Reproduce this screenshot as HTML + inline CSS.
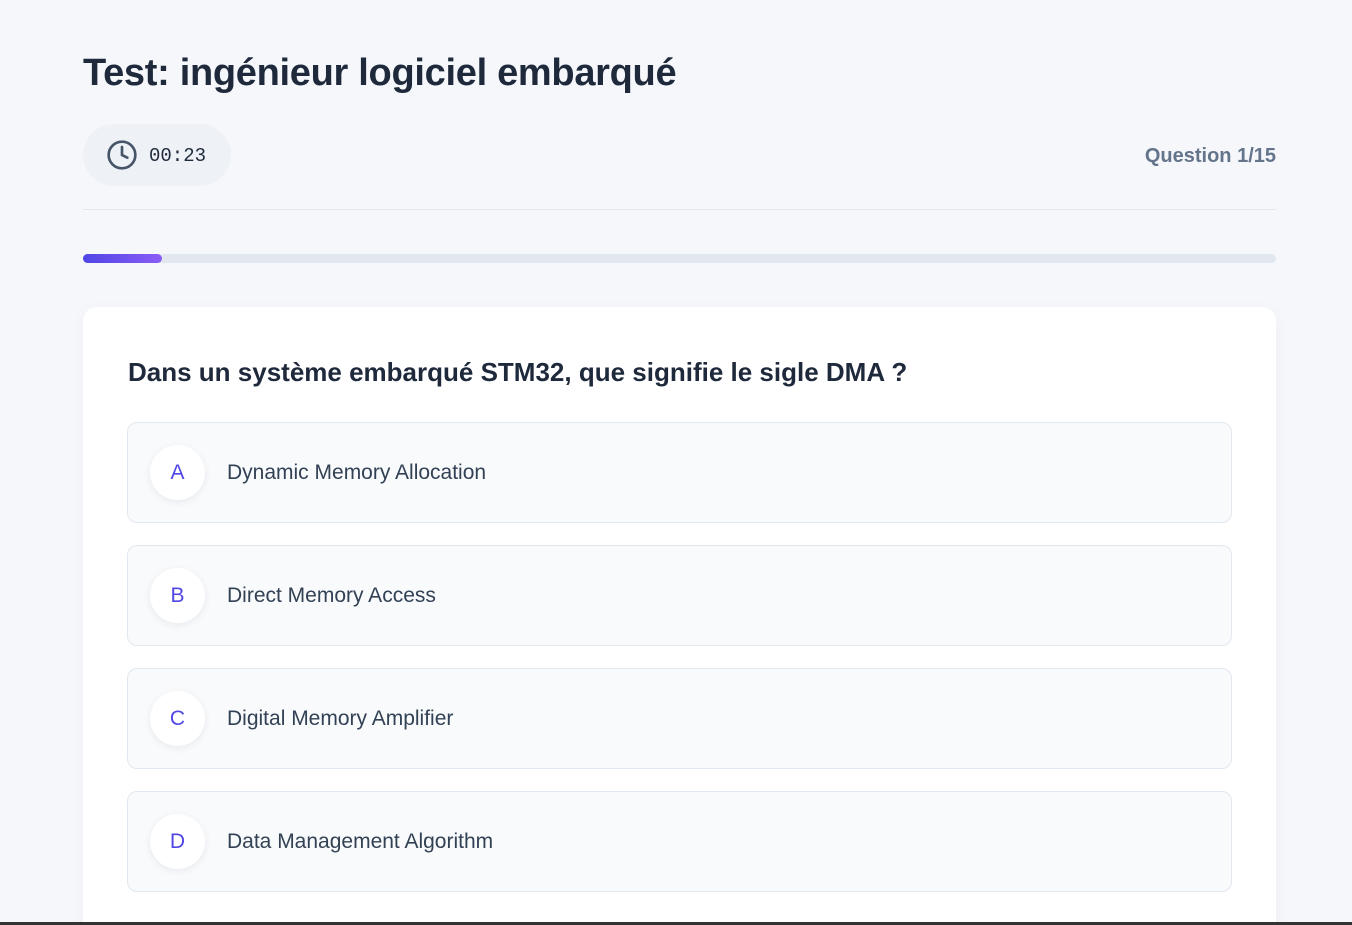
<!DOCTYPE html>
<html><head><meta charset="utf-8"><style>
*{box-sizing:border-box;margin:0;padding:0}
html,body{width:1352px;height:925px;overflow:hidden}
body{background:#f5f7fb;font-family:"Liberation Sans",sans-serif;color:#1e293b;position:relative}
h1{position:absolute;left:83px;top:52px;font-size:38px;font-weight:600;color:#1e293b;letter-spacing:-0.3px}
.timer{position:absolute;left:83px;top:124px;width:148px;height:62px;border-radius:31px;background:#eef2f7;display:flex;align-items:center;padding-left:23px}
.timer span{font-family:"Liberation Mono",monospace;font-size:19px;color:#1e293b;margin-left:11px;margin-top:2px}
.qn{position:absolute;right:76px;top:145px;font-size:20px;font-weight:600;color:#64748b}
.hr{position:absolute;left:83px;top:209px;width:1193px;height:1px;background:#e2e8f0}
.bar{position:absolute;left:83px;top:254px;width:1193px;height:9px;border-radius:5px;background:#e2e8f0}
.bar div{width:79px;height:9px;border-radius:5px;background:linear-gradient(90deg,#4f46e5,#8b5cf6)}
.card{position:absolute;left:83px;top:307px;width:1193px;height:640px;background:#fff;border-radius:14px;box-shadow:0 4px 16px rgba(15,23,42,0.04)}
.q{position:absolute;left:45px;top:50px;font-size:26px;font-weight:600;color:#1e293b}
.opt{position:absolute;left:44px;width:1105px;height:101px;border:1px solid #e2e8f0;border-radius:10px;background:#f8fafc;display:flex;align-items:center;padding-left:22px}
.l{width:55px;height:55px;border-radius:50%;background:#fff;box-shadow:0 2px 8px rgba(15,23,42,0.07);display:flex;align-items:center;justify-content:center;color:#4f46e5;font-size:21px;font-weight:500}
.t{margin-left:22px;font-size:21px;color:#334155}
.bot{position:absolute;left:0;top:922px;width:1352px;height:3px;background:#333}
</style></head><body>
<h1>Test: ingénieur logiciel embarqué</h1>
<div class="timer"><svg width="32" height="32" viewBox="0 0 24 24" fill="none" stroke="#475569" stroke-width="2" stroke-linecap="round"><circle cx="12" cy="12" r="10"/><path d="M12 6v6l4 2"/></svg><span>00:23</span></div>
<div class="qn">Question 1/15</div>
<div class="hr"></div>
<div class="bar"><div></div></div>
<div class="card">
<div class="q">Dans un système embarqué STM32, que signifie le sigle DMA ?</div>
<div class="opt" style="top:115px"><div class="l">A</div><div class="t">Dynamic Memory Allocation</div></div>
<div class="opt" style="top:238px"><div class="l">B</div><div class="t">Direct Memory Access</div></div>
<div class="opt" style="top:361px"><div class="l">C</div><div class="t">Digital Memory Amplifier</div></div>
<div class="opt" style="top:484px"><div class="l">D</div><div class="t">Data Management Algorithm</div></div>
</div>
<div class="bot"></div>
</body></html>
